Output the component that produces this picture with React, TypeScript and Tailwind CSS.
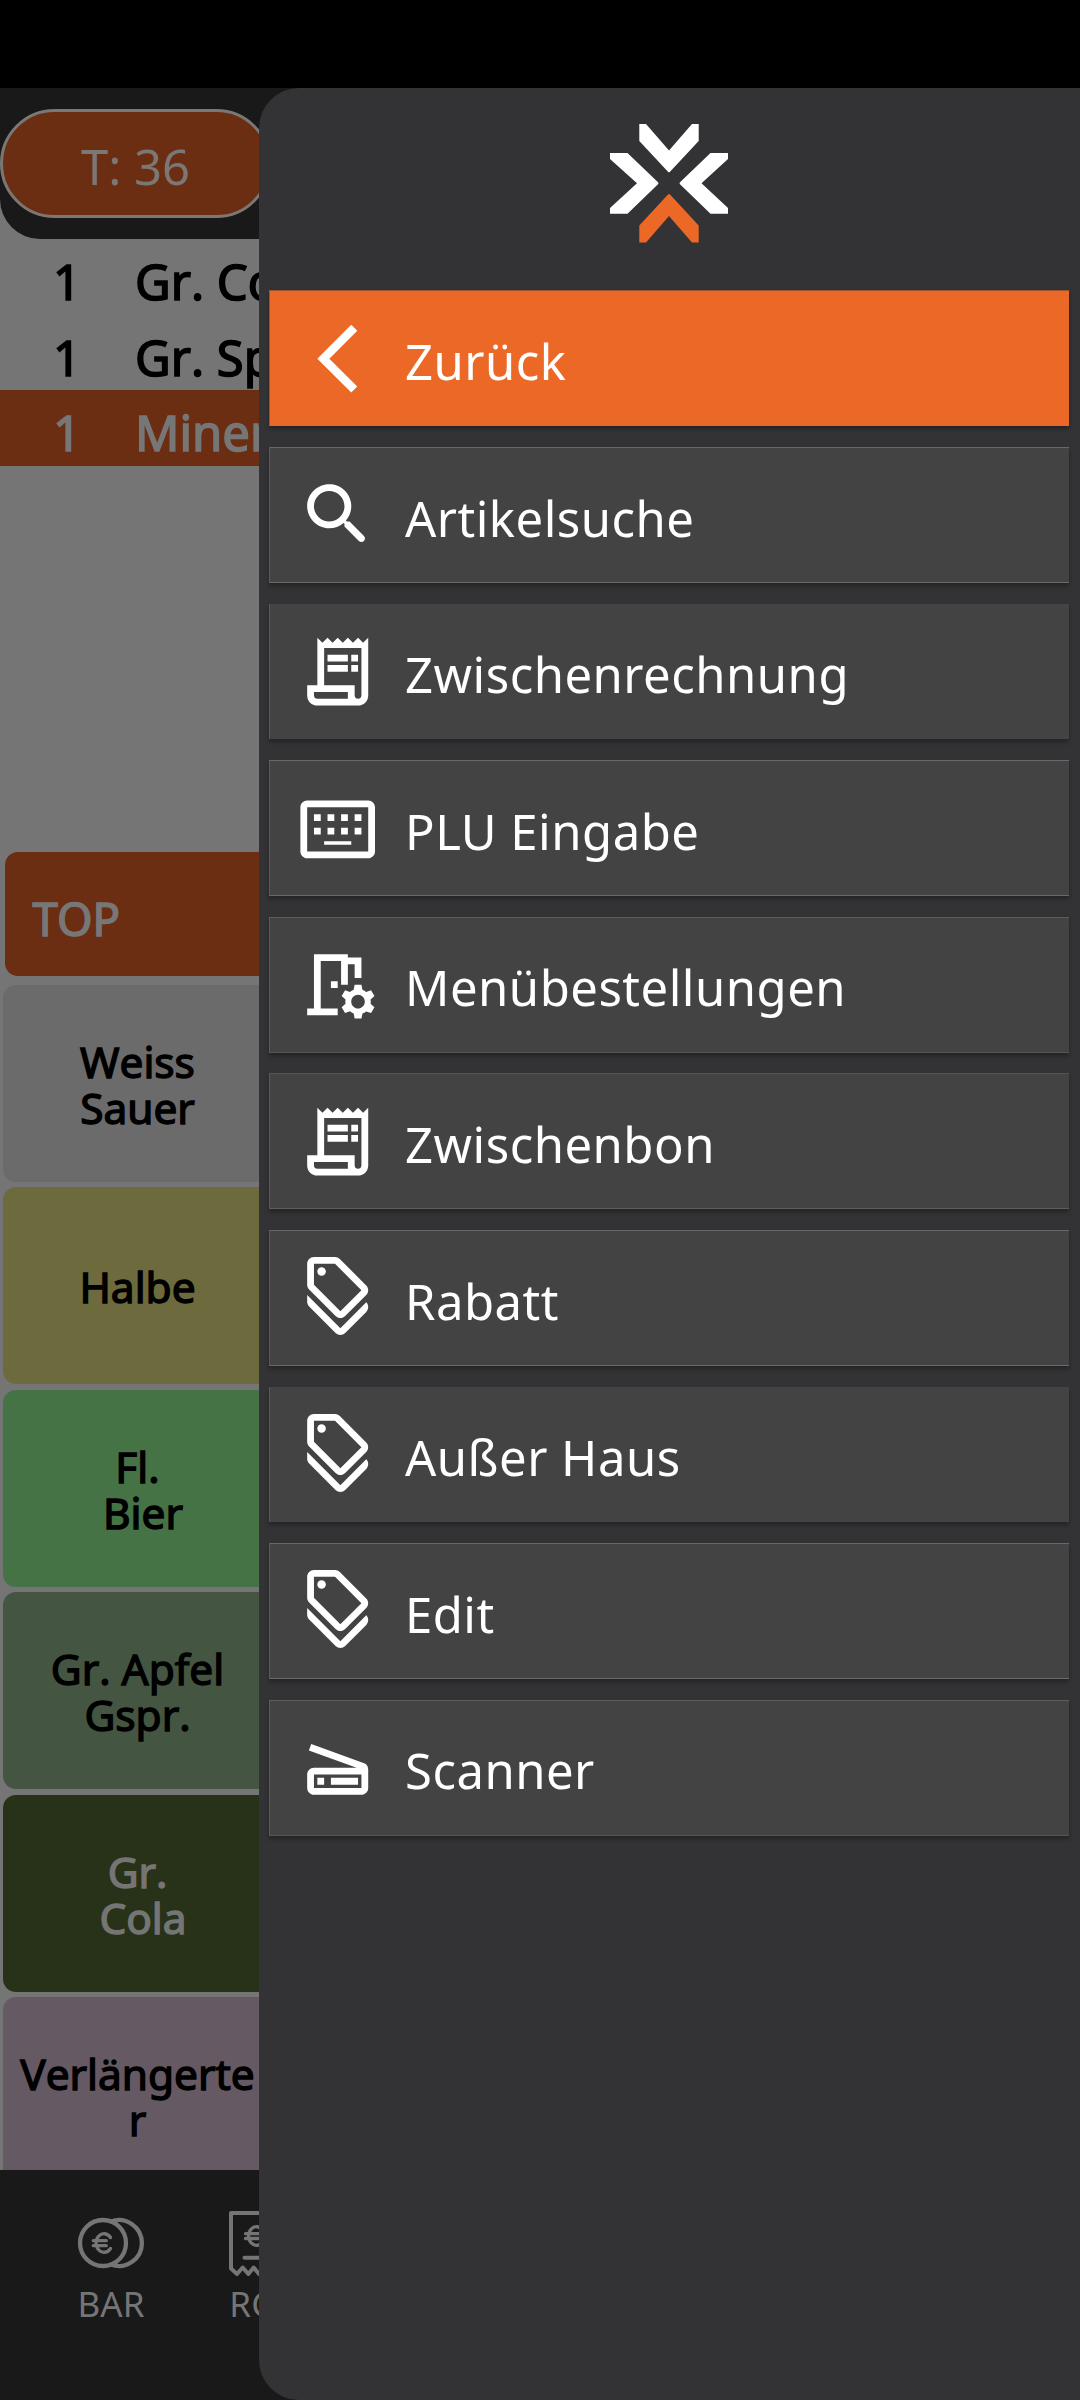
import type { IconType } from "react-icons";
import {
  MdArrowBackIosNew,
  MdOutlineDiscount,
  MdOutlineKeyboardAlt,
  MdOutlineReceiptLong,
  MdOutlineRoomPreferences,
  MdOutlineScanner,
} from "react-icons/md";

function SearchIcon({ className }: { className?: string }) {
  return (
    <svg viewBox="0 0 24 24" fill="currentColor" className={className}>
      <path d="M15.5 14h-.79l-.28-.27c1.2-1.4 1.82-3.31 1.48-5.34-.47-2.78-2.79-5-5.59-5.34-4.23-.52-7.79 3.04-7.27 7.27.34 2.8 2.56 5.12 5.34 5.59 2.03.34 3.94-.28 5.34-1.48l.27.28v.79l4.25 4.25c.41.41 1.08.41 1.49 0 .41-.41.41-1.08 0-1.49L15.5 14zm-6 0C7.01 14 5 11.99 5 9.5S7.01 5 9.5 5 14 7.01 14 9.5 11.99 14 9.5 14z" />
    </svg>
  );
}

interface MenuItem {
  label: string;
  icon: IconType | typeof SearchIcon;
  tone: string;
}

const menuItems: MenuItem[] = [
  { label: "Zurück", icon: MdArrowBackIosNew, tone: "bg-[#ec6827] border-t-[#9c532f] border-b-[#d96a35] border-l-[#9c532f]" },
  { label: "Artikelsuche", icon: SearchIcon, tone: "bg-[#434343] border-y-[#696969] border-l-[#5b5b5b]" },
  { label: "Zwischenrechnung", icon: MdOutlineReceiptLong, tone: "bg-[#434343] border-y-[#444444] border-l-[#5b5b5b]" },
  { label: "PLU Eingabe", icon: MdOutlineKeyboardAlt, tone: "bg-[#434343] border-y-[#696969] border-l-[#5b5b5b]" },
  { label: "Menübestellungen", icon: MdOutlineRoomPreferences, tone: "bg-[#434343] border-t-[#5e5e5e] border-b-[#555555] border-l-[#5b5b5b]" },
  { label: "Zwischenbon", icon: MdOutlineReceiptLong, tone: "bg-[#434343] border-t-[#555555] border-b-[#5e5e5e] border-l-[#5b5b5b]" },
  { label: "Rabatt", icon: MdOutlineDiscount, tone: "bg-[#434343] border-y-[#696969] border-l-[#5b5b5b]" },
  { label: "Außer Haus", icon: MdOutlineDiscount, tone: "bg-[#434343] border-y-[#444444] border-l-[#5b5b5b]" },
  { label: "Edit", icon: MdOutlineDiscount, tone: "bg-[#434343] border-y-[#696969] border-l-[#5b5b5b]" },
  { label: "Scanner", icon: MdOutlineScanner, tone: "bg-[#434343] border-t-[#5e5e5e] border-b-[#555555] border-l-[#5b5b5b]" },
];

const orderLines = [
  { qty: 1, name: "Gr. Cola", tone: "text-black" },
  { qty: 1, name: "Gr. Spezi", tone: "text-black" },
  { qty: 1, name: "Mineral", tone: "bg-[#6b2e12] text-[#777777]" },
];

const articles = [
  { name: "Weiss\nSauer", tone: "bg-[#6b6b6b] text-black" },
  { name: "Halbe", tone: "bg-[#6d6a3e] text-black" },
  { name: "Fl.\n Bier", tone: "bg-[#457346] text-black" },
  { name: "Gr. Apfel\nGspr.", tone: "bg-[#445642] text-black" },
  { name: "Gr.\n Cola", tone: "bg-[#283218] text-[#757575]" },
  { name: "Verlängerte\nr", tone: "bg-[#655964] text-black" },
];

function Logo() {
  return (
    <svg viewBox="0 0 120 120" className="h-[120px] w-[120px]">
      <g fill="#fff">
        <path d="M30.3 1H37L60 27.5 83 1h6.7v17L61 48.8q-1 1-2 0L30.3 18z" />
        <path d="M1 30h17.5L49 59.2q1 1 0 2L18.5 90.7H1V85L28 60.3 1 36z" />
        <path d="M119 30h-17.5L71 59.2q-1 1 0 2l30.5 29.5H119V85L92.5 60.3 119 36z" />
      </g>
      <path fill="#ec6827" d="M30.3 119.5H37L60 93l23 26.5h6.7v-17L61 71.5q-1-1-2 0L30.3 102.5z" />
    </svg>
  );
}

function CoinsIcon() {
  return (
    <svg viewBox="0 0 68 68" className="h-[68px] w-[68px]" fill="none" stroke="currentColor" strokeWidth="4.3" strokeLinecap="round">
      <circle cx="26" cy="35" r="23" />
      <path d="M34 13.4A23 23 0 1 1 34 56.6" />
      <path d="M33.5 29.5a8 9.3 0 1 0 0 11M16.3 32.7h13M16.3 37.7h13" strokeWidth="3.3" />
    </svg>
  );
}

function BillIcon() {
  return (
    <svg viewBox="0 0 68 68" className="h-[68px] w-[68px]" fill="none" stroke="currentColor" strokeWidth="4" strokeLinecap="round" strokeLinejoin="round">
      <path d="M12 5h45.5v55.5l-6 5.500-5.500-6.500-6 6.500-5.300-6.500-5.400 6.500-5.600-6.500L18 66l-6-5.500z" />
      <path d="M44 22.5a8 9.3 0 1 0 0 11M26.5 25.7h13M26.5 30.5h13" strokeWidth="3.3" />
      <path d="M25.5 49.7H44" />
    </svg>
  );
}

function BottomBar() {
  return (
    <footer className="flex h-[230px] shrink-0 bg-[#191919] pt-[38px] pl-[40px] text-[35px] leading-[46px] text-[#757575]">
      <div className="flex w-[142px] shrink-0 flex-col items-center">
        <CoinsIcon />
        <span className="mt-[5px]">BAR</span>
      </div>
      <div className="flex w-[142px] shrink-0 flex-col items-center">
        <BillIcon />
        <span className="mt-[5px]">RG</span>
      </div>
    </footer>
  );
}

function Register() {
  return (
    <main className="flex h-[2312px] w-[340px] flex-col overflow-hidden bg-[#757575]">
      <header className="h-[151px] shrink-0 rounded-bl-[40px] bg-[#191919] pt-[21px]">
        <div className="flex h-[109px] w-[271px] items-center justify-center rounded-full border-[3px] border-[#7b7774] bg-[#6b2e12] text-[49px] text-[#7b7774]">
          <span className="pt-[6px]">T: 36</span>
        </div>
      </header>
      <ul className="h-[613px] shrink-0 text-[49px] [font-kerning:none]">
        {orderLines.map((line) => (
          <li
            key={line.name}
            className={`flex h-[75.6px] items-center whitespace-nowrap pt-[9px] pl-[53px] leading-[64px] [-webkit-text-stroke:1.6px_currentColor] ${line.tone}`}
          >
            <span className="w-[82px] shrink-0">{line.qty}</span>
            <span>{line.name}</span>
          </li>
        ))}
      </ul>
      <div className="ml-[5px] flex h-[124px] shrink-0 items-center rounded-l-[13px] bg-[#6b2e12] pt-[9px] pl-[27.5px] text-[45.5px] text-[#777777] [-webkit-text-stroke:1.5px_currentColor]">
        TOP
      </div>
      <div className="mt-[9px] flex h-[1185px] w-[271px] shrink-0 flex-col gap-[5.4px] overflow-hidden pl-[3px]">
        {articles.map((article) => (
          <div
            key={article.name}
            className={`flex h-[197px] shrink-0 items-center justify-center rounded-[13px] pt-[3px] pl-px text-center text-[42.4px] leading-[46px] [font-kerning:none] [-webkit-text-stroke:1.4px_currentColor] ${article.tone}`}
          >
            <span className="whitespace-pre">{article.name}</span>
          </div>
        ))}
      </div>
      <BottomBar />
    </main>
  );
}

function Drawer() {
  return (
    <aside className="absolute top-[88px] right-0 h-[2312px] w-[821px] rounded-l-[40px] bg-[#333335] text-white">
      <div className="flex h-[202.4px] justify-center pt-[35px] pr-[2px]">
        <Logo />
      </div>
      <nav className="flex flex-col gap-[20.8px] pr-[11px] pl-[10px]">
        {menuItems.map(({ label, icon: Icon, tone }) => (
          <button
            key={label}
            type="button"
            className={`flex h-[135.8px] items-center border-y border-l pl-[27px] text-left shadow-[0_3px_4px_rgba(0,0,0,0.3)] ${tone}`}
          >
            <Icon className="h-[81.4px] w-[81.4px] shrink-0" />
            <span className="pt-[7px] pl-[26.6px] text-[49px] tracking-[0.5px]">{label}</span>
          </button>
        ))}
      </nav>
    </aside>
  );
}

export default function App() {
  return (
    <div className="relative h-[2400px] w-[1080px] overflow-hidden bg-black pt-[88px] font-['Noto_Sans',sans-serif]">
      <Register />
      <Drawer />
    </div>
  );
}
